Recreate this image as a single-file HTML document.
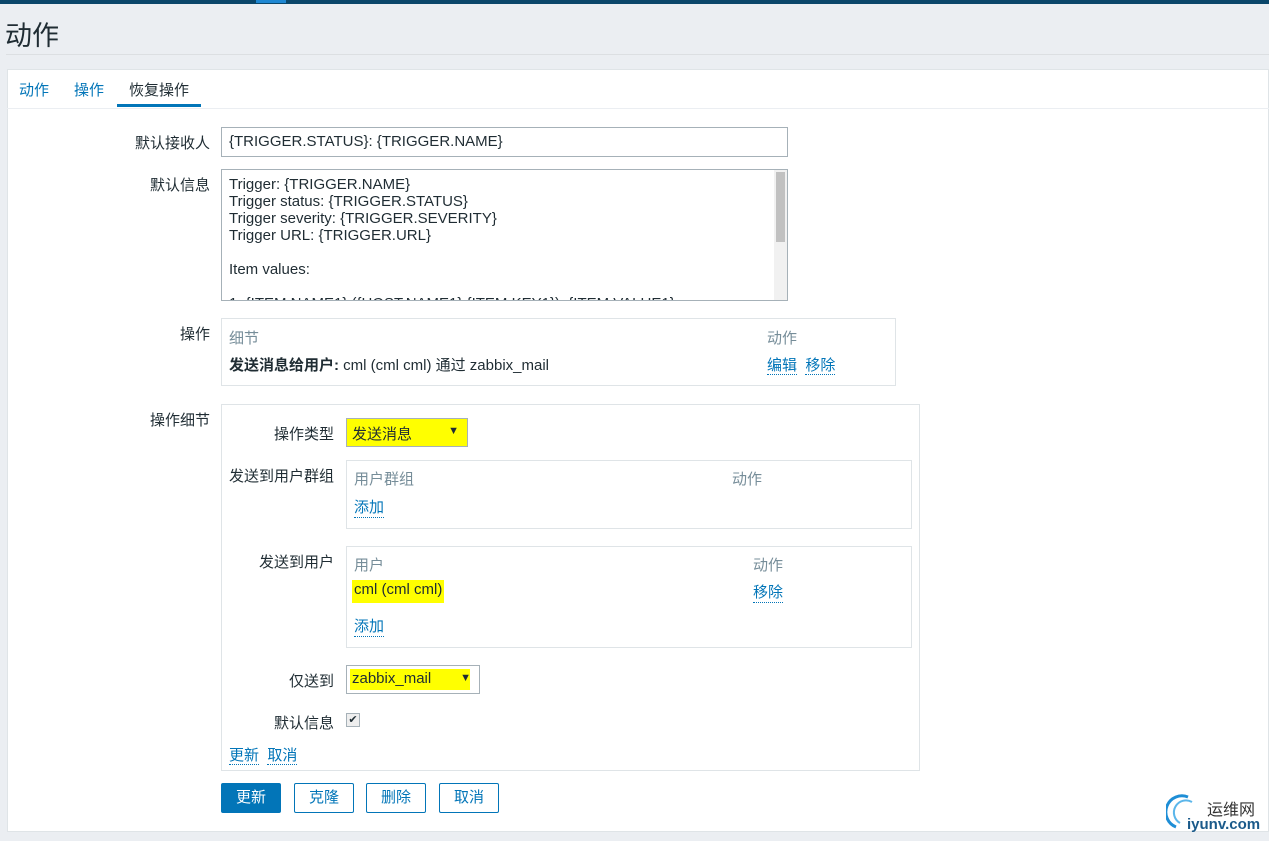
<!DOCTYPE html>
<html><head><meta charset="utf-8"><style>
*{margin:0;padding:0;box-sizing:border-box}
body{width:1269px;height:841px;background:#ebeef2;font-family:"Liberation Sans","Noto Sans CJK SC",sans-serif;font-size:15px;color:#1f2c33;position:relative;overflow:hidden}
.a{position:absolute}
.lbl{position:absolute;text-align:right;white-space:nowrap}
.link{color:#0275b8;border-bottom:1px dotted #0275b8}
.box{position:absolute;border:1px solid #dfe4e7;background:#fff}
.gray{color:#768d99}
.hl{background:#ffff00}
.btn{position:absolute;height:30px;border:1px solid #0275b8;color:#0275b8;background:#fff;border-radius:2px;text-align:center;line-height:28px;font-size:15px}
</style></head><body>
<div class="a" style="left:0;top:0;width:1269px;height:4px;background:#0a466a"></div>
<div class="a" style="left:256px;top:0;width:30px;height:3px;background:#1e87d2"></div>
<div class="a" style="left:5px;top:14px;font-size:27px;color:#1f2c33">动作</div>
<div class="a" style="left:6px;top:54px;width:1263px;height:1px;background:#dcdfe2"></div>
<div class="a" style="left:7px;top:69px;width:1262px;height:763px;background:#fff;border:1px solid #dfe4e7"></div>
<div class="a" style="left:7px;top:108px;width:1262px;height:1px;background:#ebeef2"></div>
<div class="a link" style="left:19px;top:79px;border:none">动作</div>
<div class="a link" style="left:74px;top:79px;border:none">操作</div>
<div class="a" style="left:129px;top:79px">恢复操作</div>
<div class="a" style="left:117px;top:104px;width:84px;height:3px;background:#0275b8"></div>

<div class="lbl" style="right:1059px;top:132px">默认接收人</div>
<div class="a" style="left:221px;top:127px;width:567px;height:30px;border:1px solid #a6b1b8;padding:5px 7px">{TRIGGER.STATUS}: {TRIGGER.NAME}</div>
<div class="lbl" style="right:1059px;top:174px">默认信息</div>
<div class="a" style="left:221px;top:169px;width:567px;height:132px;border:1px solid #a6b1b8;padding:6px 7px;line-height:17px;overflow:hidden">Trigger: {TRIGGER.NAME}<br>Trigger status: {TRIGGER.STATUS}<br>Trigger severity: {TRIGGER.SEVERITY}<br>Trigger URL: {TRIGGER.URL}<br><br>Item values:<br><br>1. {ITEM.NAME1} ({HOST.NAME1}:{ITEM.KEY1}): {ITEM.VALUE1}
<div class="a" style="right:0;top:0;width:13px;height:130px;background:#f1f1f1"></div>
<div class="a" style="right:2px;top:2px;width:9px;height:70px;background:#c1c1c1"></div></div>

<div class="lbl" style="right:1059px;top:323px">操作</div>
<div class="box" style="left:221px;top:318px;width:675px;height:68px"></div>
<div class="a gray" style="left:229px;top:327px">细节</div>
<div class="a gray" style="left:767px;top:327px">动作</div>
<div class="a" style="left:229px;top:354px"><b>发送消息给用户:</b> cml (cml cml) 通过 zabbix_mail</div>
<div class="a" style="left:767px;top:354px"><span class="link">编辑</span>&nbsp;&nbsp;<span class="link">移除</span></div>

<div class="lbl" style="right:1059px;top:409px">操作细节</div>
<div class="box" style="left:221px;top:404px;width:699px;height:367px"></div>
<div class="lbl" style="right:935px;top:423px">操作类型</div>
<div class="a" style="left:346px;top:418px;width:122px;height:29px;border:1px solid #a6b1b8;background:#ff0;padding:4px 5px">发送消息<span class="a" style="right:8px;top:6px;font-size:11px">▼</span></div>
<div class="lbl" style="right:935px;top:465px">发送到用户群组</div>
<div class="box" style="left:346px;top:460px;width:566px;height:69px"></div>
<div class="a gray" style="left:354px;top:468px">用户群组</div>
<div class="a gray" style="left:732px;top:468px">动作</div>
<div class="a link" style="left:354px;top:496px">添加</div>
<div class="lbl" style="right:935px;top:551px">发送到用户</div>
<div class="box" style="left:346px;top:546px;width:566px;height:102px"></div>
<div class="a gray" style="left:354px;top:554px">用户</div>
<div class="a gray" style="left:753px;top:554px">动作</div>
<div class="a hl" style="left:352px;top:580px;padding:1px 2px 5px">cml (cml cml)</div>
<div class="a link" style="left:753px;top:581px">移除</div>
<div class="a link" style="left:354px;top:615px">添加</div>
<div class="lbl" style="right:935px;top:670px">仅送到</div>
<div class="a" style="left:346px;top:665px;width:134px;height:29px;border:1px solid #a6b1b8;padding:4px 5px"><span class="a" style="left:3px;top:3px;width:120px;height:21px;background:#ff0"></span><span style="position:relative">zabbix_mail</span><span class="a" style="right:8px;top:6px;font-size:11px">▼</span></div>
<div class="lbl" style="right:935px;top:712px">默认信息</div>
<div class="a" style="left:346px;top:713px;width:14px;height:14px;border:1px solid #a6b1b8;background:#eee;font-size:11px;line-height:12px;text-align:center">✔</div>
<div class="a" style="left:229px;top:744px"><span class="link">更新</span>&nbsp;&nbsp;<span class="link">取消</span></div>

<div class="btn" style="left:221px;top:783px;width:60px;background:#0275b8;color:#fff">更新</div>
<div class="btn" style="left:294px;top:783px;width:60px">克隆</div>
<div class="btn" style="left:366px;top:783px;width:60px">删除</div>
<div class="btn" style="left:439px;top:783px;width:60px">取消</div>

<svg class="a" style="left:1166px;top:793px" width="40" height="40"><path d="M22 4 A16 16 0 1 0 10 34" fill="none" stroke="#1e8ed6" stroke-width="3"/><path d="M26 9 A11 11 0 1 0 14 30" fill="none" stroke="#5bb6ea" stroke-width="2"/></svg>
<div class="a" style="left:1207px;top:796px;font-size:16px;color:#333">运维网</div>
<div class="a" style="left:1187px;top:816px;font-size:15px;font-weight:bold;color:#1a5a8a">iyunv.com</div>
</body></html>
